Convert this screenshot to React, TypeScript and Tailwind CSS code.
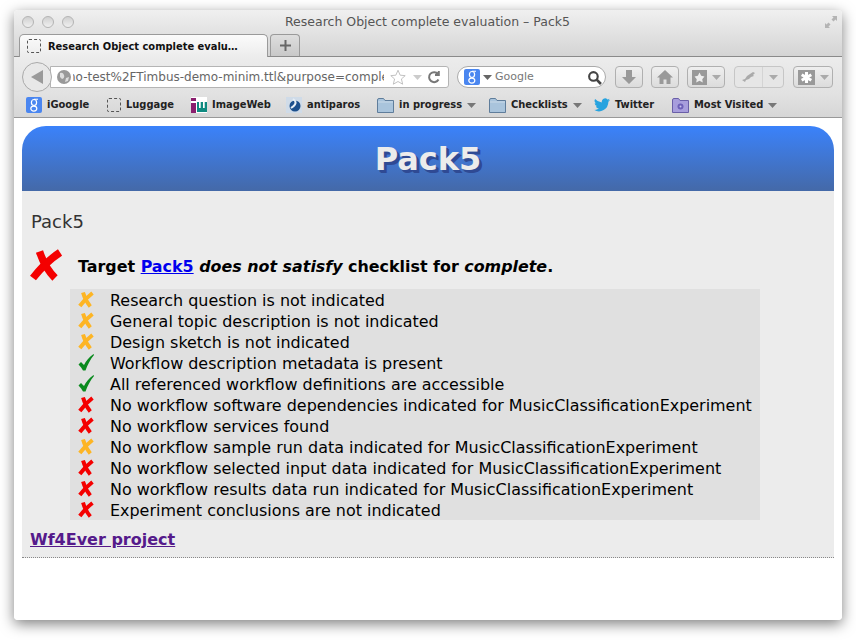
import React from "react";

const BigCross = () => (
  <svg width="32" height="32" viewBox="0 0 32 32" className="block">
    <path d="M30 3.5C20 10 10 20 3 29" fill="none" stroke="#f40000" strokeWidth="7.5" />
    <path d="M9.5 2.5C13 13 18 22 25 29" fill="none" stroke="#f40000" strokeWidth="7.5" />
  </svg>
);
const Cross = ({ c }: { c: string }) => (
  <svg width="16" height="17" viewBox="0 0 16 17" className="block">
    <path d="M14.5 2C10 5.5 5.5 10 1.8 15" fill="none" stroke={c} strokeWidth="3.9" />
    <path d="M5 1.5C6.5 7 9 11.5 12.3 15.5" fill="none" stroke={c} strokeWidth="3.9" />
  </svg>
);
const Check = () => (
  <svg width="16" height="17" viewBox="0 0 16 17" className="block">
    <path d="M.5 10.5L3 8 6 11C8 7 11 3 15.5 0L16 1C12.5 5 9.5 11 7.5 16.5H5C4 14.5 2.5 12.5.5 10.5Z" fill="#0a8a1e" />
  </svg>
);
const Folder = ({ fill = "#a9c4dc", edge = "#5f7d9b" }: { fill?: string; edge?: string }) => (
  <svg width="17" height="16" viewBox="0 0 17 16" className="block shrink-0">
    <path d="M.5 3V15.5H16.5V3.5H8L6.5 1.5H2Q.5 1.5.5 3Z" fill={fill} stroke={edge} />
    <path d="M1 5H16" stroke="#d8e4ee" strokeOpacity=".7" />
  </svg>
);
const G = () => (
  <div className="w-4 h-4 shrink-0 rounded-[2px] bg-[#4a86f0]">
    <svg width="16" height="16" viewBox="0 0 16 16" className="block">
      <ellipse cx="8" cy="5.5" rx="2.6" ry="3" fill="none" stroke="#fff" strokeWidth="1.2" />
      <ellipse cx="7.8" cy="11.6" rx="3" ry="2.5" fill="none" stroke="#fff" strokeWidth="1.2" />
      <path d="M8 2.3H12" stroke="#fff" strokeWidth="1.1" />
    </svg>
  </div>
);
const Dashed = () => <div className="w-[14px] h-[14px] shrink-0 border border-dashed border-[#555] rounded-[2px]" />;
const Caret = ({ c = "#777" }: { c?: string }) => (
  <svg width="9" height="5" viewBox="0 0 9 5" className="block shrink-0"><path d="M0 0H9L4.5 5Z" fill={c} /></svg>
);
const Light = () => <div className="w-3 h-3 rounded-full border border-[#b4b4b4] bg-gradient-to-b from-[#d0d0d0] to-[#f0f0f0]" />;
const Btn = ({ w, children }: { w: string; children: React.ReactNode }) => (
  <div className={`${w} h-[22px] flex items-center justify-center gap-[5px] rounded-[4px] border border-[#b0b0b0] bg-gradient-to-b from-[#efefef] to-[#dcdcdc]`}>
    {children}
  </div>
);
const Bm = ({ icon, label, caret, w }: { icon: React.ReactNode; label: string; caret?: boolean; w: string }) => (
  <div className={`flex items-center gap-[5px] ${w} shrink-0`}>
    {icon}
    <span className="pt-px text-[11px] font-bold text-[#222] whitespace-nowrap font-['DejaVu_Sans_Condensed','DejaVu_Sans',sans-serif]">{label}</span>
    {caret && <Caret />}
  </div>
);

const rows: [string, string][] = [
  ["w", "Research question is not indicated"],
  ["w", "General topic description is not indicated"],
  ["w", "Design sketch is not indicated"],
  ["c", "Workflow description metadata is present"],
  ["c", "All referenced workflow definitions are accessible"],
  ["x", "No workflow software dependencies indicated for MusicClassificationExperiment"],
  ["x", "No workflow services found"],
  ["w", "No workflow sample run data indicated for MusicClassificationExperiment"],
  ["x", "No workflow selected input data indicated for MusicClassificationExperiment"],
  ["x", "No workflow results data run indicated for MusicClassificationExperiment"],
  ["x", "Experiment conclusions are not indicated"],
];

export default function App() {
  return (
    <div className="w-[856px] h-[640px] bg-white pt-[10px] pl-[14px] overflow-hidden font-['DejaVu_Sans',sans-serif]">
      <div className="w-[828px] h-[610px] flex flex-col rounded-[4px] overflow-hidden bg-white shadow-[0_4px_14px_rgba(0,0,0,0.5)]">
        {/* title bar */}
        <div className="h-[47px] shrink-0 flex flex-col bg-gradient-to-b from-[#f0f0f0] to-[#d4d4d4] border-b border-[#8a8a8a]">
          <div className="h-[24px] flex items-center">
            <div className="flex gap-2 pl-2"><Light /><Light /><Light /></div>
            <div className="flex-1 text-center text-[12.5px] text-[#555] pr-[43px]">Research Object complete evaluation – Pack5</div>
            <svg width="14" height="14" viewBox="0 0 14 14" className="mr-[4px]">
              <path d="M8 1H13V6L11.5 4.500 9.500 6.500 7.500 4.500 9.500 2.500ZM6 13H1V8L2.500 9.500 4.500 7.500 6.500 9.500 4.500 11.500Z" fill="#b4b4b4" />
            </svg>
          </div>
          <div className="flex items-end h-[22px] pl-[5px] gap-[2px]">
            <div className="w-[249px] h-[23px] -mb-px flex items-center gap-[7px] pl-[7px] bg-gradient-to-b from-[#fbfbfb] to-[#ececec] border border-b-0 border-[#9a9a9a] rounded-t-[5px]">
              <Dashed />
              <span className="pt-[3px] text-[11px] font-bold text-[#111] whitespace-nowrap font-['DejaVu_Sans_Condensed','DejaVu_Sans',sans-serif]">Research Object complete evalu…</span>
            </div>
            <div className="w-[30px] h-[22px] flex items-center justify-center bg-gradient-to-b from-[#dedede] to-[#c8c8c8] border border-b-0 border-[#9a9a9a] rounded-t-[4px]">
              <svg width="11" height="11" viewBox="0 0 11 11"><path d="M4.500 0H6.500V4.500H11V6.500H6.500V11H4.500V6.500H0V4.500H4.500Z" fill="#666" /></svg>
            </div>
          </div>
        </div>
        {/* toolbar */}
        <div className="h-[36px] shrink-0 flex items-center pt-[4px] pl-2 bg-gradient-to-b from-[#ececec] to-[#e2e2e2]">
          <div className="w-[30px] h-[30px] shrink-0 rounded-full border border-[#aaa] bg-[#e8e8e8] flex items-center justify-center z-10">
            <svg width="14" height="16" viewBox="0 0 14 16"><path d="M13 1V15L1 8Z" fill="#9a9a9a" /></svg>
          </div>
          <div className="w-[399px] h-[22px] -ml-[2px] shrink-0 flex items-center bg-white border border-[#b4b4b4] rounded-r-[3px] pl-[6px] pr-[7px]">
            <svg width="14" height="14" viewBox="0 0 14 14" className="shrink-0"><circle cx="7" cy="7" r="7" fill="#999" /><path d="M3 3Q6 2 7 5T5 9L3 7ZM9 8L12 7 11 11 8 12Z" fill="#ddd" /></svg>
            <div className="ml-[2px] w-[311px] shrink-0 overflow-hidden">
              <div className="-ml-[5px] whitespace-nowrap text-[12px] text-[#666]">no-test%2FTimbus-demo-minim.ttl&amp;purpose=complete</div>
            </div>
            <svg width="18" height="18" viewBox="0 0 20 18" className="shrink-0 ml-[5px]"><path d="M10 1.500L12.400 7 18 7.500 13.800 11.200 15.200 17 10 14 4.800 17 6.200 11.200 2 7.500 7.600 7Z" fill="#fff" stroke="#bbb" /></svg>
            <span className="ml-[6px]"><Caret c="#ccc" /></span>
            <svg width="14" height="14" viewBox="0 0 14 14" className="ml-auto shrink-0"><path d="M11.500 9.500A5 5 0 1 1 11 4M11.800 1V5H8" fill="none" stroke="#777" strokeWidth="2" /></svg>
          </div>
          <div className="w-[149px] h-[22px] ml-[8px] shrink-0 flex items-center rounded-full bg-white border border-[#aaa] pl-[6px] pr-[3px] gap-[3px]">
            <G />
            <Caret c="#666" />
            <span className="pt-px text-[11px] text-[#777]">Google</span>
            <svg width="15" height="15" viewBox="0 0 14 14" className="ml-auto"><circle cx="6" cy="6" r="4" fill="none" stroke="#444" strokeWidth="2" /><path d="M9 9L13 13" stroke="#444" strokeWidth="2.500" /></svg>
          </div>
          <div className="flex items-center ml-[9px] gap-[8px]">
            <Btn w="w-[28px]"><svg width="16" height="16" viewBox="0 0 16 16"><path d="M5 1H11V8H15L8 15 1 8H5Z" fill="#999" /></svg></Btn>
            <Btn w="w-[28px]"><svg width="18" height="16" viewBox="0 0 18 16"><path d="M9 1L17 8.500H14.500V15H10.500V10.500H7.500V15H3.500V8.500H1Z" fill="#999" /></svg></Btn>
            <Btn w="w-[38px]">
              <div className="w-[15px] h-[15px] bg-[#999] flex items-center justify-center"><svg width="11" height="11" viewBox="0 0 20 20"><path d="M10 1L13 7 19 8 15 13 16 19 10 16 4 19 5 13 1 8 7 7Z" fill="#eee" /></svg></div>
              <Caret c="#aaa" />
            </Btn>
            <div className="w-[50px] h-[22px] ml-[1px] flex items-center rounded-[4px] border border-[#c6c6c6] bg-[#e6e6e6]">
              <div className="w-[28px] flex justify-center border-r border-[#d4d4d4] h-full items-center">
                <svg width="16" height="12" viewBox="0 0 16 12"><path d="M1 9L4 8 6 5 9 3 12 1 14 2 12 4 13 5 10 6 8 8 5 9 4 11Z" fill="#aaa" /></svg>
              </div>
              <div className="flex-1 flex justify-center"><Caret c="#aaa" /></div>
            </div>
            <Btn w="w-[40px] ml-[1px]">
              <div className="w-[17px] h-[15px] bg-[#999] flex items-center justify-center">
                <svg width="13" height="13" viewBox="0 0 13 13"><path d="M6.500 1V12M1.700 3.700L11.300 9.300M11.300 3.700L1.700 9.300" stroke="#fff" strokeWidth="3" /></svg>
              </div>
              <Caret c="#aaa" />
            </Btn>
          </div>
        </div>
        {/* bookmarks */}
        <div className="h-[25px] shrink-0 flex items-center pl-[12px] bg-gradient-to-b from-[#e2e2e2] to-[#d6d6d6] border-b border-[#999]">
          <Bm w="w-[81px]" icon={<G />} label="iGoogle" />
          <Bm w="w-[84px]" icon={<Dashed />} label="Luggage" />
          <Bm w="w-[95px]" icon={
            <svg width="16" height="16" viewBox="0 0 16 16" className="shrink-0"><rect width="16" height="16" fill="#fff" /><path d="M0 1H5V4H0ZM0 6H5V16H0Z" fill="#8a1f6e" /><path d="M6 5H8V11H9.700V5H12V11H13.700V5H16V15H6Z" fill="#0f8a80" /></svg>
          } label="ImageWeb" />
          <Bm w="w-[91px]" icon={
            <svg width="16" height="16" viewBox="0 0 16 16" className="shrink-0"><rect width="16" height="16" fill="#cfdbe8" /><circle cx="9" cy="9" r="5.500" fill="#1c4f8c" /><path d="M7 2Q13 6 5 11" stroke="#e6eef6" strokeWidth="2" fill="none" /></svg>
          } label="antiparos" />
          <Bm w="w-[112px]" icon={<Folder />} label="in progress" caret />
          <Bm w="w-[105px]" icon={<Folder />} label="Checklists" caret />
          <Bm w="w-[78px]" icon={
            <svg width="16" height="14" viewBox="0 0 24 20" className="shrink-0"><path d="M24 2.400a9.800 9.800 0 0 1-2.800.8 4.900 4.900 0 0 0 2.100-2.700 9.800 9.800 0 0 1-3.100 1.200A4.900 4.900 0 0 0 11.800 6.100 14 14 0 0 1 1.700 1a4.900 4.900 0 0 0 1.500 6.600 4.900 4.900 0 0 1-2.200-.6 4.900 4.900 0 0 0 3.900 4.800 4.900 4.900 0 0 1-2.200.1 4.900 4.900 0 0 0 4.600 3.400A9.900 9.900 0 0 1 0 17.300 14 14 0 0 0 21.500 5a10 10 0 0 0 2.500-2.600Z" fill="#27a3df" /></svg>
          } label="Twitter" />
          <Bm w="w-[110px]" icon={
            <svg width="17" height="16" viewBox="0 0 17 16" className="shrink-0"><path d="M.5 3V15.500H16.500V3.500H8L6.500 1.500H2Q.5 1.500.5 3Z" fill="#a79ddc" stroke="#6a5fa8" /><circle cx="8.500" cy="9.500" r="3" fill="#6d60b8" /><circle cx="8.500" cy="9.500" r="1" fill="#c9c2ee" /></svg>
          } label="Most Visited" caret />
        </div>
        {/* page */}
        <div className="flex-1 bg-white p-2 text-black">
          <div className="h-[65px] flex items-center justify-center rounded-t-[24px] bg-gradient-to-b from-[#3a82fb] to-[#4469a8]">
            <h1 className="text-[32px] font-bold text-[#ececec] [text-shadow:2px_2px_0_#2f4a94,3px_3px_0_#2f4a94]">Pack5</h1>
          </div>
          <div className="h-[367px] bg-[#ececec] border-b border-dotted border-[#888] pt-[19px]">
            <div className="pl-[9px] text-[18px] leading-6 text-[#333]">Pack5</div>
            <div className="flex items-center mt-[15px] pl-[8px] h-[32px]">
              <BigCross />
              <div className="ml-[16px] pt-[3px] text-[15.9px] font-bold whitespace-nowrap">
                Target <a href="#" className="text-[#0000ee] underline">Pack5</a> <em>does not satisfy</em> checklist for <em>complete</em>.
              </div>
            </div>
            <div className="ml-[48px] mt-[8px] w-[690px] bg-[#e0e0e0] flex flex-col">
              {rows.map(([k, t]) => (
                <div key={t} className="h-[21px] flex items-center pl-[8px]">
                  <div className="w-4 shrink-0">{k === "c" ? <Check /> : <Cross c={k === "w" ? "#fdb524" : "#f40000"} />}</div>
                  <span className="ml-[16px] mt-[2px] text-[15.94px] leading-[21px] whitespace-nowrap">{t}</span>
                </div>
              ))}
            </div>
            <a href="#" className="block w-fit ml-2 mt-[10px] text-[16px] leading-5 font-bold text-[#551a8b] underline">Wf4Ever project</a>
          </div>
        </div>
      </div>
    </div>
  );
}
